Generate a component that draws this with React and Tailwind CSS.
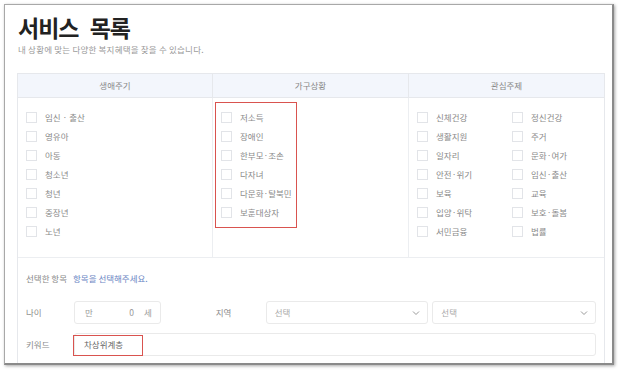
import React from "react";

const font = { fontFamily: '"Noto Sans CJK KR", "Noto Sans", sans-serif' };

function Box() {
  return <span className="inline-block w-[11px] h-[11px] border border-[#e2e4e8] bg-white shrink-0" />;
}

function Item({ label }) {
  return (
    <div className="h-[19px] flex items-center gap-[8px]">
      <Box />
      <span className="text-[8.5px] text-[#8a8a8a] leading-none whitespace-nowrap">{label}</span>
    </div>
  );
}

function Chevron() {
  return (
    <svg width="8" height="6" viewBox="0 0 8 6" className="shrink-0">
      <path d="M1 1.5 L4 4.5 L7 1.5" fill="none" stroke="#9a9a9a" strokeWidth="1" />
    </svg>
  );
}

export default function App() {
  const life = ["임신 · 출산", "영유아", "아동", "청소년", "청년", "중장년", "노년"];
  const house = ["저소득", "장애인", "한부모·조손", "다자녀", "다문화·탈북민", "보훈대상자"];
  const interestA = ["신체건강", "생활지원", "일자리", "안전·위기", "보육", "입양·위탁", "서민금융"];
  const interestB = ["정신건강", "주거", "문화·여가", "임신·출산", "교육", "보호·돌봄", "법률"];
  return (
    <div className="w-[618px] h-[370px] bg-white relative overflow-hidden" style={font}>
      <div className="absolute left-[4px] top-[4px] w-[610px] h-[361px] border border-[#a8a8a8] border-r-2 border-b-2 border-r-[#8a8a8a] border-b-[#8a8a8a] shadow-[1px_1px_3px_rgba(0,0,0,0.35)] bg-white overflow-hidden">
        <div className="pl-[12px] pr-[4px]">
          <h1 className="ml-[1px] mt-[9px] text-[23px] font-bold leading-[26px] tracking-[-1px] [word-spacing:7px] text-[#222]">서비스 목록</h1>
          <p className="ml-[1px] mt-[3px] text-[8.5px] leading-[12px] tracking-[0.2px] text-[#999]">내 상황에 맞는 다양한 복지혜택을 찾을 수 있습니다.</p>
          <div className="mt-[18px] w-[588px] border-x border-[#e6e8ec]">
            <div className="grid grid-cols-[195px_196px_1fr] border-t border-[#e6e8ec]">
              <div className="h-[24px] bg-[#f3f6fc] border-r border-b border-[#e6e8ec] flex items-center justify-center text-[8.5px] text-[#888]">생애주기</div>
              <div className="h-[24px] bg-[#f3f6fc] border-r border-b border-[#e6e8ec] flex items-center justify-center text-[8.5px] text-[#888]">가구상황</div>
              <div className="h-[24px] bg-[#f3f6fc] border-b border-[#e6e8ec] flex items-center justify-center text-[8.5px] text-[#888]">관심주제</div>
              <div className="h-[160px] border-r border-b border-[#eceef1] pl-[8px] pt-[10px]">
                {life.map((l) => <Item key={l} label={l} />)}
              </div>
              <div className="h-[160px] border-r border-b border-[#eceef1] pl-[8px] pt-[10px]">
                {house.map((l) => <Item key={l} label={l} />)}
              </div>
              <div className="h-[160px] border-b border-[#eceef1] pl-[8px] pt-[10px] grid grid-cols-[95px_1fr] content-start">
                <div>{interestA.map((l) => <Item key={l} label={l} />)}</div>
                <div>{interestB.map((l) => <Item key={l} label={l} />)}</div>
              </div>
            </div>
            <div className="px-[8px]">
              <div className="h-[40px] flex items-center gap-[6px] text-[8.5px]">
                <span className="text-[#8a8a8a]">선택한 항목</span>
                <span className="text-[#6b86c4]">항목을 선택해주세요.</span>
              </div>
              <div className="flex items-center h-[23px] mt-[3px]">
                <span className="w-[48px] text-[8.5px] text-[#8a8a8a]">나이</span>
                <div className="w-[87px] h-[23px] border border-[#eaeaea] rounded-[3px] flex items-center pl-[10px] pr-[8px] text-[8.5px] text-[#999]">
                  <span>만</span>
                  <span className="ml-auto mr-[10px]">0</span>
                  <span>세</span>
                </div>
                <span className="ml-[55px] w-[50px] text-[8.5px] text-[#8a8a8a]">지역</span>
                <div className="w-[163px] h-[23px] border border-[#eaeaea] rounded-[3px] flex items-center pl-[8px] pr-[7px] text-[8.5px] text-[#aaa]">
                  <span>선택</span>
                  <span className="ml-auto"><Chevron /></span>
                </div>
                <div className="ml-[4px] w-[164px] h-[23px] border border-[#eaeaea] rounded-[3px] flex items-center pl-[8px] pr-[7px] text-[8.5px] text-[#aaa]">
                  <span>선택</span>
                  <span className="ml-auto"><Chevron /></span>
                </div>
              </div>
              <div className="flex items-center h-[23px] mt-[9px]">
                <span className="w-[48px] text-[8.5px] text-[#8a8a8a]">키워드</span>
                <div className="flex-1 h-[23px] border border-[#eaeaea] rounded-[3px] flex items-center pl-[9px] text-[8.5px] text-[#666]">
                  차상위계층
                </div>
              </div>
              <div className="h-[20px]" />
            </div>
          </div>
        </div>
        <div className="absolute left-[210px] top-[97px] w-[82px] h-[126px] border-[1.5px] border-[#d9534f]" />
        <div className="absolute left-[68px] top-[330px] w-[70px] h-[21px] border-[1.5px] border-[#d9534f]" />
      </div>
    </div>
  );
}
